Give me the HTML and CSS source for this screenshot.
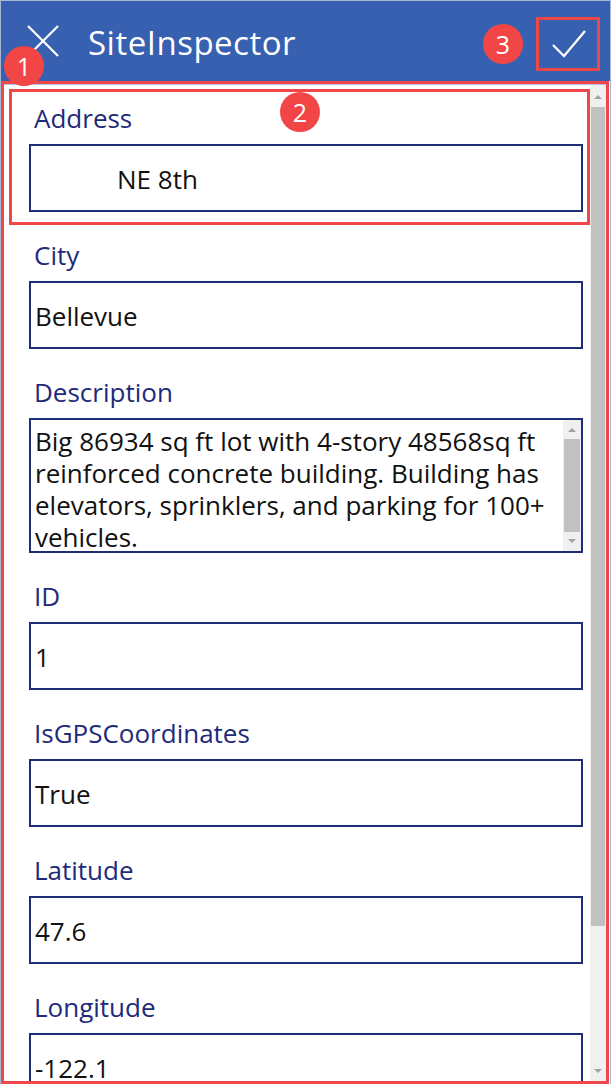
FILE: index.html
```html
<!DOCTYPE html>
<html lang="en">
<head>
    <meta charset="UTF-8">
    <meta name="viewport" content="width=device-width, initial-scale=1.0">
    <title>SiteInspector</title>
    <link rel="stylesheet" href="styles.css">
</head>
<body>
    <div class="app">
        <header class="header">
            <svg class="close-icon" width="32" height="32" viewBox="0 0 32 32">
                <path d="M1 1 L31 31 M31 1 L1 31" stroke="#fff" stroke-width="2.2" fill="none"/>
            </svg>
            <span class="title">SiteInspector</span>
            <div class="check-box">
                <svg width="40" height="30" viewBox="0 0 40 30">
                    <path d="M5 16 L16 27 L37 2" stroke="#fff" stroke-width="2.2" fill="none"/>
                </svg>
            </div>
            <span class="badge badge-3">3</span>
        </header>

        <div class="panel">
            <span class="badge badge-1">1</span>
            <div class="panel-inner">
                <div class="form">
                    <!-- Address card is highlighted -->
                    <div class="field field-highlight">
                        <span class="badge badge-2">2</span>
                        <div class="label">Address</div>
                        <div class="input input-indent">NE 8th</div>
                    </div>

                    <div class="field">
                        <div class="label">City</div>
                        <div class="input">Bellevue</div>
                    </div>

                    <div class="field">
                        <div class="label">Description</div>
                        <div class="textarea">
                            <div class="textarea-text">Big 86934 sq ft lot with 4-story 48568sq ft<br>reinforced concrete building. Building has<br>elevators, sprinklers, and parking for 100+<br>vehicles.</div>
                            <div class="mini-scroll">
                                <span class="arrow arrow-up"></span>
                                <span class="mini-thumb"></span>
                                <span class="arrow arrow-down"></span>
                            </div>
                        </div>
                    </div>

                    <div class="field">
                        <div class="label">ID</div>
                        <div class="input">1</div>
                    </div>

                    <div class="field">
                        <div class="label">IsGPSCoordinates</div>
                        <div class="input">True</div>
                    </div>

                    <div class="field">
                        <div class="label">Latitude</div>
                        <div class="input">47.6</div>
                    </div>

                    <div class="field">
                        <div class="label">Longitude</div>
                        <div class="input">-122.1</div>
                    </div>
                </div>

                <div class="scrollbar">
                    <span class="arrow arrow-up"></span>
                    <span class="thumb"></span>
                    <span class="arrow arrow-down"></span>
                </div>
            </div>
        </div>
    </div>
</body>
</html>
```

FILE: styles.css
```css
body {
    margin: 0;
    background: #fff;
    font-family: "Open Sans", "Noto Sans", sans-serif;
}

.app {
    width: 611px;
    height: 1084px;
    box-sizing: border-box;
    border: 1px solid #a9b6d2;
    border-bottom: none;
    display: flex;
    flex-direction: column;
    overflow: hidden;
    position: relative;
}

/* Title bar */
.header {
    height: 80px;
    flex-shrink: 0;
    background-color: #3860b0;
    display: flex;
    align-items: center;
    padding-left: 26px;
    position: relative;
}

.close-icon {
    flex-shrink: 0;
}

.title {
    color: #fff;
    font-size: 33px;
    letter-spacing: 0.5px;
    margin-left: 29px;
    padding-top: 3px;
}

.check-box {
    margin-left: auto;
    margin-right: 10px;
    margin-top: 6px;
    width: 64px;
    height: 54px;
    box-sizing: border-box;
    border: 3px solid #f04848;
    display: flex;
    align-items: center;
    justify-content: center;
}

/* Numbered callouts */
.badge {
    position: absolute;
    width: 40px;
    height: 40px;
    border-radius: 50%;
    background-color: #f24646;
    color: #fff;
    font-size: 25px;
    line-height: 40px;
    text-align: center;
    z-index: 2;
}

.badge-1 {
    left: 0;
    top: -38px;
}

.badge-2 {
    left: 268px;
    top: 0;
}

.badge-3 {
    left: 482px;
    top: 23px;
}

/* Form panel */
.panel {
    flex: 1;
    border: 3px solid #f04848;
    margin-right: 1px;
    position: relative;
    min-height: 0;
}

.panel-inner {
    height: 100%;
    box-sizing: border-box;
    border-top: 1px solid #b5c3e3;
    display: flex;
}

.form {
    flex: 1;
    overflow: hidden;
    padding: 4px 0 0 5px;
}

.field {
    padding: 0 7px 0 20px;
    margin-bottom: 27px;
    position: relative;
}

.field-highlight {
    border: 3px solid #f04848;
    padding: 10px 4px 10px 17px;
    margin-bottom: 14px;
}

.label {
    color: #1e2a7a;
    font-size: 26px;
    height: 32px;
    line-height: 32px;
    padding-left: 5px;
    margin-bottom: 10px;
}

.input {
    height: 68px;
    box-sizing: border-box;
    border: 2px solid #1f2d78;
    padding: 2px 4px 0;
    display: flex;
    align-items: center;
    font-size: 26px;
    color: #111;
}

.input-indent {
    padding-left: 86px;
}

.textarea {
    height: 135px;
    box-sizing: border-box;
    border: 2px solid #1f2d78;
    display: flex;
    overflow: hidden;
}

.textarea-text {
    flex: 1;
    padding: 5px 4px 0;
    font-size: 26px;
    line-height: 32px;
    color: #111;
    white-space: nowrap;
    overflow: hidden;
}

/* Fake scrollbars */
.mini-scroll,
.scrollbar {
    flex-shrink: 0;
    background-color: #f0f0f0;
    display: flex;
    flex-direction: column;
    align-items: center;
}

.mini-scroll {
    width: 18px;
}

.scrollbar {
    width: 16px;
}

.arrow {
    width: 0;
    height: 0;
    border-left: 4px solid transparent;
    border-right: 4px solid transparent;
}

.arrow-up {
    border-bottom: 4px solid #a3a3a3;
    margin: 8px 0 7px;
}

.arrow-down {
    border-top: 4px solid #a3a3a3;
    margin: 7px 0 8px;
}

.mini-thumb {
    width: 16px;
    flex: 1;
    background-color: #c1c1c1;
}

.thumb {
    width: 14px;
    height: 819px;
    margin-bottom: auto;
    background-color: #c1c1c1;
}

.scrollbar .arrow-up {
    margin: 10px 0 8px;
}

.scrollbar .arrow-down {
    margin: 0 0 8px;
}
```
